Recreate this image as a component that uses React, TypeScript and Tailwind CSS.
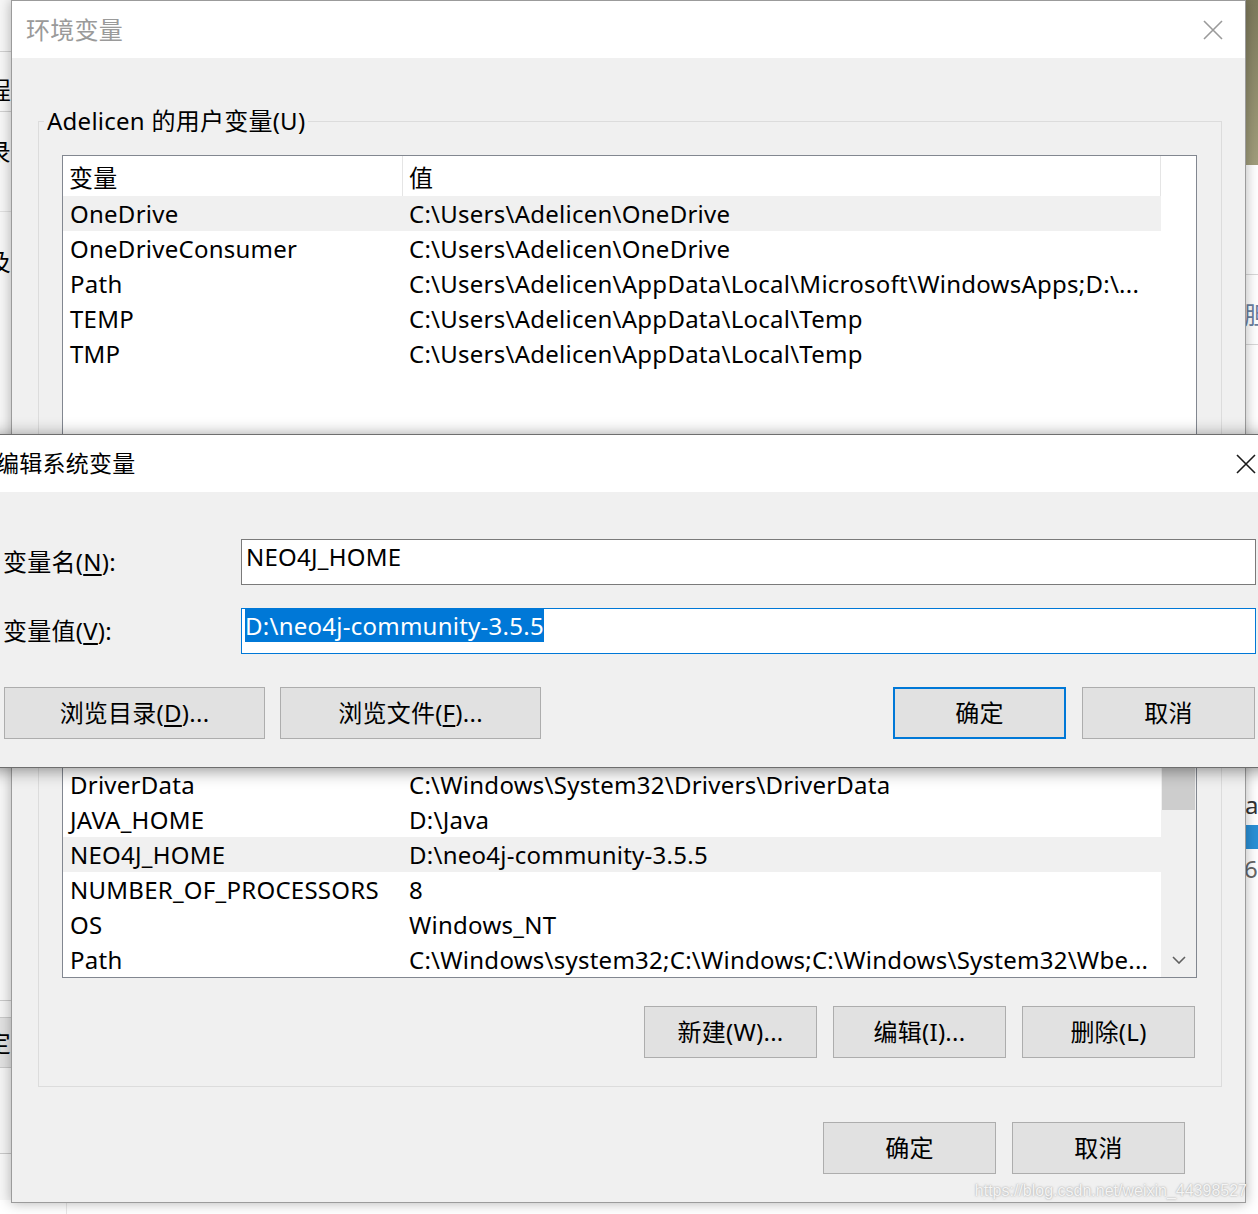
import React from "react";

// Environment-variable dialogs: the parent list window with the edit dialog on top.
const FONT = "font-['Noto_Sans','Noto_Sans_CJK_SC',sans-serif] tracking-[0.25px]";

const USER_VARS: [string, string][] = [
  ["OneDrive", "C:\\Users\\Adelicen\\OneDrive"],
  ["OneDriveConsumer", "C:\\Users\\Adelicen\\OneDrive"],
  ["Path", "C:\\Users\\Adelicen\\AppData\\Local\\Microsoft\\WindowsApps;D:\\..."],
  ["TEMP", "C:\\Users\\Adelicen\\AppData\\Local\\Temp"],
  ["TMP", "C:\\Users\\Adelicen\\AppData\\Local\\Temp"],
];

const SYSTEM_VARS: [string, string][] = [
  ["ComSpec", "C:\\Windows\\system32\\cmd.exe"],
  ["DriverData", "C:\\Windows\\System32\\Drivers\\DriverData"],
  ["JAVA_HOME", "D:\\Java"],
  ["NEO4J_HOME", "D:\\neo4j-community-3.5.5"],
  ["NUMBER_OF_PROCESSORS", "8"],
  ["OS", "Windows_NT"],
  ["Path", "C:\\Windows\\system32;C:\\Windows;C:\\Windows\\System32\\Wbe..."],
];

function CloseIcon({ color }: { color: string }) {
  return (
    <svg width="20" height="20" viewBox="0 0 20 20" className="shrink-0">
      <path d="M1 1 L19 19 M19 1 L1 19" stroke={color} strokeWidth="1.6" fill="none" />
    </svg>
  );
}

function Button({
  children,
  w,
  primary = false,
}: {
  children: React.ReactNode;
  w: string;
  primary?: boolean;
}) {
  return (
    <div
      className={`${w} h-[52px] shrink-0 flex items-center justify-center bg-[#e1e1e1] text-[24px] text-black ${
        primary ? "border-2 border-[#0078d7]" : "border border-[#adadad]"
      }`}
    >
      {children}
    </div>
  );
}

function VarList({
  rows,
  selected,
  height,
  scroll = false,
}: {
  rows: [string, string][];
  selected: number;
  height: string;
  scroll?: boolean;
}) {
  return (
    <div className={`${height} border border-[#828790] bg-white flex overflow-hidden`}>
      <div className="flex-1 min-w-0 flex flex-col">
        <div className="h-[40px] shrink-0 flex text-[24px]">
          <div className="w-[340px] shrink-0 border-r border-[#e5e5e5] pl-[6px] pt-[3px] flex items-center">变量</div>
          <div className="flex-1 border-r border-[#e5e5e5] pl-[6px] pt-[3px] flex items-center">值</div>
        </div>
        {rows.map(([name, value], i) => (
          <div
            key={name + i}
            className={`h-[35px] shrink-0 flex items-center text-[24px] whitespace-nowrap ${
              i === selected ? "bg-[#f0f0f0]" : ""
            }`}
          >
            <div className="w-[340px] shrink-0 pl-[7px]">{name}</div>
            <div className="flex-1 pl-[6px] overflow-hidden">{value}</div>
          </div>
        ))}
      </div>
      <div className={`w-[35px] shrink-0 flex flex-col ${scroll ? "bg-[#f0f0f0]" : "bg-white"}`}>
        {scroll && (
          <>
            <div className="h-[35px] flex items-center justify-center">
              <svg width="14" height="8" viewBox="0 0 14 8">
                <path d="M1 7 L7 1 L13 7" stroke="#606060" strokeWidth="1.6" fill="none" />
              </svg>
            </div>
            <div className="h-[83px] mx-px bg-[#cdcdcd]" />
            <div className="flex-1" />
            <div className="h-[35px] flex items-center justify-center">
              <svg width="14" height="8" viewBox="0 0 14 8">
                <path d="M1 1 L7 7 L13 1" stroke="#606060" strokeWidth="1.6" fill="none" />
              </svg>
            </div>
          </>
        )}
      </div>
    </div>
  );
}

function GroupBox({
  title,
  children,
  className = "",
}: {
  title: string;
  children: React.ReactNode;
  className?: string;
}) {
  return (
    <fieldset className={`border border-[#dcdcdc] pl-[23px] pr-[24px] pt-[19px] pb-[28px] ${className}`}>
      <legend className="-ml-[18px] px-[3px] text-[24px] leading-[30px] text-black">{title}</legend>
      {children}
    </fieldset>
  );
}

function ListButtons() {
  return (
    <div className="flex justify-end gap-[16px] mt-[28px] mr-[2px]">
      <Button w="w-[173px]">新建(W)...</Button>
      <Button w="w-[173px]">编辑(I)...</Button>
      <Button w="w-[173px]">删除(L)</Button>
    </div>
  );
}

function EnvDialog() {
  return (
    <div className="absolute left-[11px] top-0 w-[1235px] h-[1203px] border border-[#9b9b9b] bg-[#f0f0f0] shadow-[0_0_12px_rgba(0,0,0,0.3)] flex flex-col">
      <div className="h-[57px] shrink-0 bg-white flex items-center justify-between pl-[14px] pr-[22px]">
        <span className="text-[24px] text-[#9a9a9a]">环境变量</span>
        <CloseIcon color="#9a9a9a" />
      </div>
      <div className="flex flex-col pl-[26px] pr-[23px]">
        <GroupBox title="Adelicen 的用户变量(U)" className="mt-[48px]">
          <VarList rows={USER_VARS} selected={0} height="h-[366px]" />
          <ListButtons />
        </GroupBox>
        <GroupBox title="系统变量(S)" className="mt-[12px]">
          <VarList rows={SYSTEM_VARS} selected={3} height="h-[287px]" scroll />
          <ListButtons />
        </GroupBox>
        <div className="flex justify-end gap-[16px] mt-[35px] pr-[37px]">
          <Button w="w-[173px]">确定</Button>
          <Button w="w-[173px]">取消</Button>
        </div>
      </div>
      <div className="absolute right-[-2px] bottom-[-1px] text-[16px] tracking-normal text-[#f4f4f4] [text-shadow:0_0_2px_rgba(110,110,110,0.7)] font-['Liberation_Sans',sans-serif]">
        https://blog.csdn.net/weixin_44398527
      </div>
    </div>
  );
}

function EditDialog() {
  return (
    <div className="absolute left-[-15px] top-[434px] w-[1294px] h-[334px] border border-[#6e6e6e] bg-[#f0f0f0] shadow-[0_2px_16px_rgba(0,0,0,0.45)] flex flex-col">
      <div className="h-[57px] shrink-0 bg-white flex items-center justify-between pl-[10px] pr-[22px]">
        <span className="text-[23px] text-black">编辑系统变量</span>
        <CloseIcon color="#1a1a1a" />
      </div>
      <div className="flex flex-col pl-[17px] pr-[22px] pt-[47px]">
        <div className="flex items-center">
          <div className="w-[238px] shrink-0 text-[24px]">
            变量名(<u className="underline-offset-[3px]">N</u>):
          </div>
          <div className="flex-1 h-[46px] border border-[#7a7a7a] bg-white pl-[4px] pt-[2px] text-[24px] leading-[30px]">
            NEO4J_HOME
          </div>
        </div>
        <div className="flex items-center mt-[23px]">
          <div className="w-[238px] shrink-0 text-[24px]">
            变量值(<u className="underline-offset-[3px]">V</u>):
          </div>
          <div className="flex-1 h-[46px] border border-[#0078d7] bg-white pl-[3px] pt-[2px] text-[24px] leading-[30px]">
            <span className="bg-[#0078d7] text-white">D:\neo4j-community-3.5.5</span>
          </div>
        </div>
        <div className="flex items-center mt-[33px] pl-px">
          <Button w="w-[261px]">
            浏览目录(<u className="underline-offset-[3px]">D</u>)...
          </Button>
          <div className="ml-[15px]">
            <Button w="w-[261px]">
              浏览文件(<u className="underline-offset-[3px]">F</u>)...
            </Button>
          </div>
          <div className="flex-1" />
          <Button w="w-[173px]" primary>
            确定
          </Button>
          <div className="ml-[16px] mr-px">
            <Button w="w-[173px]">取消</Button>
          </div>
        </div>
      </div>
    </div>
  );
}

// Windows peeking out behind the dialogs at both edges of the desktop.
function Backdrop() {
  return (
    <>
      <div className="absolute left-[-300px] top-0 w-[312px] h-[1200px] bg-[#f7f7f7] border-r border-[#bdbdbd] flex flex-col text-[24px] text-black">
        <div className="h-[52px] border-b border-[#d0d0d0]" />
        <div className="h-[60px] border-b border-[#d0d0d0] flex items-end justify-end pb-[3px]">程</div>
        <div className="h-[100px] border-b border-[#e0e0e0] flex items-center justify-end pb-[20px]">录</div>
        <div className="h-[100px] flex items-center justify-end">及</div>
        <div className="h-[138px] border-b border-[#e0e0e0]" />
        <div className="h-[550px]" />
        <div className="h-[18px] border-y border-[#c8c8c8] bg-[#f4f4f4]" />
        <div className="h-[50px] bg-[#e1e1e1] border-b border-[#c8c8c8] flex items-center justify-end">定</div>
        <div className="h-[86px] bg-[#f4f4f4] border-b border-[#c8c8c8]" />
      </div>
      <div className="absolute left-[1230px] top-0 w-[40px] h-[166px] bg-[linear-gradient(180deg,#7e7a5c,#a19e7c)]" />
      <div className="absolute left-[1240px] top-[165px] w-[40px] h-[1049px] bg-white flex flex-col text-[24px] text-[#333]">
        <div className="h-[110px] border-b border-[#d8d8d8]" />
        <div className="h-[20px]" />
        <div className="h-[40px] pl-[4px] flex items-center text-[#6a7fa0]">胆</div>
        <div className="h-[10px] border-b border-[#d8d8d8]" />
        <div className="h-[440px]" />
        <div className="h-[40px] pl-[5px] flex items-center">a</div>
        <div className="h-[24px] bg-[#2a90d6]" />
        <div className="h-[40px] pl-[4px] flex items-center text-[#666]">6.</div>
      </div>
      <div className="absolute left-[66px] top-[1203px] w-px h-[11px] bg-[#e8e8e8]" />
    </>
  );
}

export default function App() {
  return (
    <div className={`relative w-[1258px] h-[1214px] overflow-hidden bg-white text-black ${FONT}`}>
      <Backdrop />
      <EnvDialog />
      <EditDialog />
    </div>
  );
}
